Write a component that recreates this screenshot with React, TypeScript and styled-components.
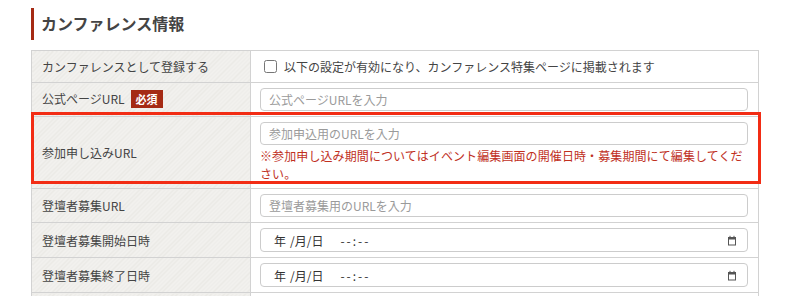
import React, { FC } from "react";
import styled, { createGlobalStyle } from "styled-components";

const GlobalStyle = createGlobalStyle`
  html, body {
    margin: 0;
    padding: 0;
    background: #ffffff;
  }
  body {
    font-family: "Noto Sans CJK JP", "Noto Sans", sans-serif;
    color: #333333;
  }
`;

interface IRow {
  id: string;
  label: string;
  required?: boolean;
  kind: "text" | "date" | "check";
  placeholder?: string;
  note?: string;
}

const rows: IRow[] = [
  {
    id: "conference",
    label: "カンファレンスとして登録する",
    kind: "check",
    placeholder: "以下の設定が有効になり、カンファレンス特集ページに掲載されます",
  },
  {
    id: "official",
    label: "公式ページURL",
    required: true,
    kind: "text",
    placeholder: "公式ページURLを入力",
  },
  {
    id: "entry",
    label: "参加申し込みURL",
    kind: "text",
    placeholder: "参加申込用のURLを入力",
    note: "※参加申し込み期間についてはイベント編集画面の開催日時・募集期間にて編集してください。",
  },
  { id: "cfp", label: "登壇者募集URL", kind: "text", placeholder: "登壇者募集用のURLを入力" },
  { id: "cfpStart", label: "登壇者募集開始日時", kind: "date" },
  { id: "cfpEnd", label: "登壇者募集終了日時", kind: "date" },
  { id: "next", label: "", kind: "text", placeholder: "" },
];

const CalendarIcon: FC = () => (
  <svg width="10" height="11" viewBox="0 0 10 11">
    <rect x="1.5" y="2.5" width="7" height="7.5" fill="none" stroke="#555" strokeWidth="1" />
    <rect x="1" y="2" width="8" height="2.5" fill="#555" />
    <rect x="2.5" y="0.8" width="1" height="1.6" fill="#555" />
    <rect x="6.5" y="0.8" width="1" height="1.6" fill="#555" />
  </svg>
);

const Field: FC<{ row: IRow }> = ({ row }) => {
  if (row.kind === "check") {
    return (
      <CheckLabel>
        <CheckBox type="checkbox" />
        <span>{row.placeholder}</span>
      </CheckLabel>
    );
  }
  if (row.kind === "date") {
    return (
      <DateBox>
        <DateText>
          <span>年</span>
          <DatePart>/月/日</DatePart>
          <TimePart>--:--</TimePart>
        </DateText>
        <CalendarIcon />
      </DateBox>
    );
  }
  return (
    <>
      <TextInput type="text" placeholder={row.placeholder} />
      {row.note && <Note>{row.note}</Note>}
    </>
  );
};

const App: FC = () => {
  return (
    <Page>
      <GlobalStyle />
      <Heading>カンファレンス情報</Heading>
      <TableWrap>
        <Table>
          <tbody>
            {rows.map((row) => (
              <tr key={row.id}>
                <LabelCell>
                  {row.label}
                  {row.required && <Badge>必須</Badge>}
                </LabelCell>
                <ValueCell>
                  <Field row={row} />
                </ValueCell>
              </tr>
            ))}
          </tbody>
        </Table>
        <Highlight />
      </TableWrap>
    </Page>
  );
};

export default App;

const Page = styled.div`
  padding: 8px 0 0 31px;
`;

const Heading = styled.h2`
  margin: 0 0 10px 0;
  height: 32px;
  line-height: 31px;
  border-left: 3px solid #a52a14;
  padding-left: 7px;
  font-size: 16px;
  font-weight: 700;
  color: #444444;
`;

const TableWrap = styled.div`
  position: relative;
  width: 728px;
`;

const Table = styled.table`
  width: 728px;
  border-collapse: collapse;
  border: 1px solid #d2d2d2;
  table-layout: fixed;
`;

const LabelCell = styled.th`
  width: 198px;
  padding: 0 10px;
  text-align: left;
  vertical-align: middle;
  font-size: 12px;
  font-weight: 400;
  color: #444444;
  border: 1px solid #d2d2d2;
  background-color: #f2f1ee;
  background-image: repeating-linear-gradient(
    -45deg,
    #f2f1ee 0px,
    #f2f1ee 2px,
    #eae9e5 2px,
    #eae9e5 3px
  );
  white-space: nowrap;
`;

const ValueCell = styled.td`
  padding: 5px 10px 5px 9px;
  vertical-align: top;
  border: 1px solid #d2d2d2;
  background: #ffffff;
`;

const Badge = styled.span`
  display: inline-block;
  margin-left: 6px;
  padding: 0 5px;
  height: 18px;
  line-height: 18px;
  background: #a52a14;
  color: #ffffff;
  font-size: 11px;
  font-weight: 700;
  vertical-align: middle;
  position: relative;
  top: -1px;
`;

const TextInput = styled.input`
  display: block;
  box-sizing: border-box;
  width: 100%;
  height: 23px;
  margin: 0;
  padding: 0 8px;
  border: 1px solid #cccccc;
  border-radius: 4px;
  font-family: inherit;
  font-size: 12px;
  color: #333333;
  background: #ffffff;
  outline: none;

  &::placeholder {
    color: #9a9a9a;
  }
`;

const Note = styled.p`
  margin: 2px 0 0 0;
  font-size: 12px;
  line-height: 18px;
  color: #c0301e;
  letter-spacing: 0.1px;
`;

const CheckLabel = styled.label`
  display: flex;
  align-items: center;
  gap: 7px;
  padding-left: 4px;
  height: 21px;
  font-size: 12px;
  color: #444444;
`;

const CheckBox = styled.input`
  width: 13px;
  height: 13px;
  margin: 0;
`;

const DateBox = styled.div`
  box-sizing: border-box;
  height: 24px;
  display: flex;
  align-items: center;
  justify-content: space-between;
  padding: 0 10px 0 13px;
  border: 1px solid #cccccc;
  border-radius: 4px;
  background: #ffffff;
`;

const DateText = styled.span`
  display: flex;
  align-items: center;
  font-size: 12px;
  color: #333333;
  white-space: pre;
`;

const DatePart = styled.span`
  margin-left: 4px;
`;

const TimePart = styled.span`
  margin-left: 17px;
  letter-spacing: 2px;
`;

const Highlight = styled.div`
  position: absolute;
  left: 0;
  top: 62px;
  width: 730px;
  height: 72px;
  box-sizing: border-box;
  border: 3px solid #f22c14;
  pointer-events: none;
`;
